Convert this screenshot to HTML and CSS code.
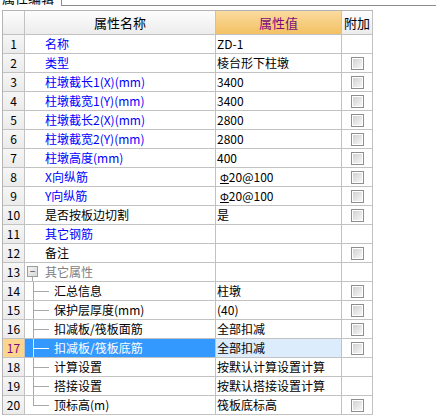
FILE: index.html
```html
<!DOCTYPE html>
<html lang="zh-CN">
<head>
    <meta charset="UTF-8">
    <title>属性编辑</title>
    <link rel="stylesheet" href="styles.css">
</head>
<body>

<div class="tabbar">
    <div class="tab">属性编辑</div>
    <div class="tab-rest"></div>
</div>

<table class="grid">
    <thead>
        <tr>
            <th class="no"></th>
            <th class="name-h">属性名称</th>
            <th class="val-h">属性值</th>
            <th class="add-h">附加</th>
        </tr>
    </thead>
    <tbody>
        <tr><td class="no">1</td><td class="name blue">名称</td><td class="val">ZD-1</td><td class="add"></td></tr>
        <tr><td class="no">2</td><td class="name blue">类型</td><td class="val">棱台形下柱墩</td><td class="add"><span class="chk"></span></td></tr>
        <tr><td class="no">3</td><td class="name blue">柱墩截长1(X)(mm)</td><td class="val">3400</td><td class="add"><span class="chk"></span></td></tr>
        <tr><td class="no">4</td><td class="name blue">柱墩截宽1(Y)(mm)</td><td class="val">3400</td><td class="add"><span class="chk"></span></td></tr>
        <tr><td class="no">5</td><td class="name blue">柱墩截长2(X)(mm)</td><td class="val">2800</td><td class="add"><span class="chk"></span></td></tr>
        <tr><td class="no">6</td><td class="name blue">柱墩截宽2(Y)(mm)</td><td class="val">2800</td><td class="add"><span class="chk"></span></td></tr>
        <tr><td class="no">7</td><td class="name blue">柱墩高度(mm)</td><td class="val">400</td><td class="add"><span class="chk"></span></td></tr>
        <tr><td class="no">8</td><td class="name blue">X向纵筋</td><td class="val"><span class="rebar">Φ</span>20@100</td><td class="add"><span class="chk"></span></td></tr>
        <tr><td class="no">9</td><td class="name blue">Y向纵筋</td><td class="val"><span class="rebar">Φ</span>20@100</td><td class="add"><span class="chk"></span></td></tr>
        <tr><td class="no">10</td><td class="name">是否按板边切割</td><td class="val">是</td><td class="add"><span class="chk"></span></td></tr>
        <tr><td class="no">11</td><td class="name blue">其它钢筋</td><td class="val"></td><td class="add"></td></tr>
        <tr><td class="no">12</td><td class="name">备注</td><td class="val"></td><td class="add"><span class="chk"></span></td></tr>
        <tr>
            <td class="no">13</td>
            <td class="tree-cell"><div class="node"><span class="toggle"><span class="box">−</span></span><span class="group">其它属性</span></div></td>
            <td class="val"></td><td class="add"></td>
        </tr>
        <tr><td class="no">14</td><td class="tree-cell"><div class="node"><span class="elbow"></span>汇总信息</div></td><td class="val">柱墩</td><td class="add"><span class="chk"></span></td></tr>
        <tr><td class="no">15</td><td class="tree-cell"><div class="node"><span class="elbow"></span>保护层厚度(mm)</div></td><td class="val">(40)</td><td class="add"><span class="chk"></span></td></tr>
        <tr><td class="no">16</td><td class="tree-cell"><div class="node"><span class="elbow"></span>扣减板/筏板面筋</div></td><td class="val">全部扣减</td><td class="add"><span class="chk"></span></td></tr>
        <tr class="current"><td class="no">17</td><td class="tree-cell"><div class="node"><span class="elbow"></span>扣减板/筏板底筋</div></td><td class="val">全部扣减</td><td class="add"><span class="chk"></span></td></tr>
        <tr><td class="no">18</td><td class="tree-cell"><div class="node"><span class="elbow"></span>计算设置</div></td><td class="val">按默认计算设置计算</td><td class="add"></td></tr>
        <tr><td class="no">19</td><td class="tree-cell"><div class="node"><span class="elbow"></span>搭接设置</div></td><td class="val">按默认搭接设置计算</td><td class="add"></td></tr>
        <tr><td class="no">20</td><td class="tree-cell"><div class="node"><span class="elbow last"></span>顶标高(m)</div></td><td class="val">筏板底标高</td><td class="add"><span class="chk"></span></td></tr>
    </tbody>
</table>

</body>
</html>
```

FILE: styles.css
```css
body {
    margin: 0;
    padding: 0;
    background-color: #fff;
    color: #000;
    font-family: "Noto Sans CJK SC", "DejaVu Sans", sans-serif;
    font-size: 12px;
}
.tabbar {
    display: flex;
    height: 10px;
    overflow: hidden;
}
.tab {
    width: 61px;
    padding-left: 2px;
    box-sizing: border-box;
    font-size: 13px;
    line-height: 13px;
    margin-top: -9px;
}
.tab-rest {
    flex: 1;
    height: 5px;
    border-left: 1px solid #8c8c8c;
    border-bottom: 1px solid #8c8c8c;
}
.grid {
    margin-left: 2px;
    width: 371px;
    table-layout: fixed;
    border-collapse: separate;
    border-spacing: 0;
    border-left: 1px solid #b4b4b4;
    border-top: 1px solid #b4b4b4;
}
.grid th,
.grid td {
    box-sizing: border-box;
    padding: 0;
    border-right: 1px solid #c2c2c2;
    border-bottom: 1px solid #c2c2c2;
    white-space: nowrap;
    overflow: hidden;
}
.grid th {
    height: 24px;
    font-weight: normal;
    font-size: 13px;
    background: linear-gradient(#fdfdfd, #ececec);
}
.grid td {
    height: 19px;
    line-height: 18px;
}
.grid th.no { width: 22px; }
.grid th.name-h { width: 191px; }
.grid th.val-h {
    width: 126px;
    color: #7d0a7d;
    background: linear-gradient(#fbdb9f, #f2c162);
}
.grid th.add-h { width: 31px; }
.grid td.no {
    text-align: center;
    background: linear-gradient(#f6f6f6, #ebebeb);
}
.name {
    padding-left: 20px !important;
}
.blue {
    color: #0000ff;
}
.val {
    padding-left: 1px !important;
}
.rebar {
    display: inline-block;
    margin-left: 3px;
    font-size: 11px;
    text-decoration: underline;
}
.add {
    text-align: center;
    font-size: 0;
}
.chk {
    display: inline-block;
    vertical-align: middle;
    width: 13px;
    height: 13px;
    box-sizing: border-box;
    border: 1px solid #8e8e8e;
    padding: 1px;
    background: #fff;
}
.chk::after {
    content: "";
    display: block;
    width: 9px;
    height: 9px;
    background: linear-gradient(135deg, #d2d2d2, #f6f6f6);
}
.node {
    display: flex;
    align-items: center;
    height: 18px;
}
.toggle {
    display: flex;
    align-items: center;
    margin-left: 2px;
    width: 11px;
    height: 18px;
    background: linear-gradient(#a8a8a8, #a8a8a8) no-repeat 5px 14px / 1px 4px;
}
.box {
    width: 11px;
    height: 11px;
    box-sizing: border-box;
    border: 1px solid #9c9c9c;
    background: linear-gradient(135deg, #f4f4f4, #d8d8d8);
    color: #444;
    font-size: 10px;
    line-height: 8px;
    text-align: center;
    margin-top: -1px;
}
.group {
    margin-left: 7px;
    color: #808080;
}
.elbow {
    margin-left: 8px;
    margin-right: 5px;
    width: 16px;
    height: 18px;
    background:
        linear-gradient(#a8a8a8, #a8a8a8) no-repeat 0 0 / 1px 100%,
        linear-gradient(#a8a8a8, #a8a8a8) no-repeat 0 9px / 100% 1px;
}
.elbow.last {
    background:
        linear-gradient(#a8a8a8, #a8a8a8) no-repeat 0 0 / 1px 10px,
        linear-gradient(#a8a8a8, #a8a8a8) no-repeat 0 9px / 100% 1px;
}
.current td.no {
    background: #fcd58e;
    color: #7d0a7d;
}
.current .tree-cell {
    background-color: #3399ff;
    color: #fff;
}
.current .elbow {
    background:
        linear-gradient(#d8ebff, #d8ebff) no-repeat 0 0 / 1px 100%,
        linear-gradient(#ffffff, #ffffff) no-repeat 0 9px / 100% 1px;
}
.current td.val {
    background-color: #dcecfd;
}
```
